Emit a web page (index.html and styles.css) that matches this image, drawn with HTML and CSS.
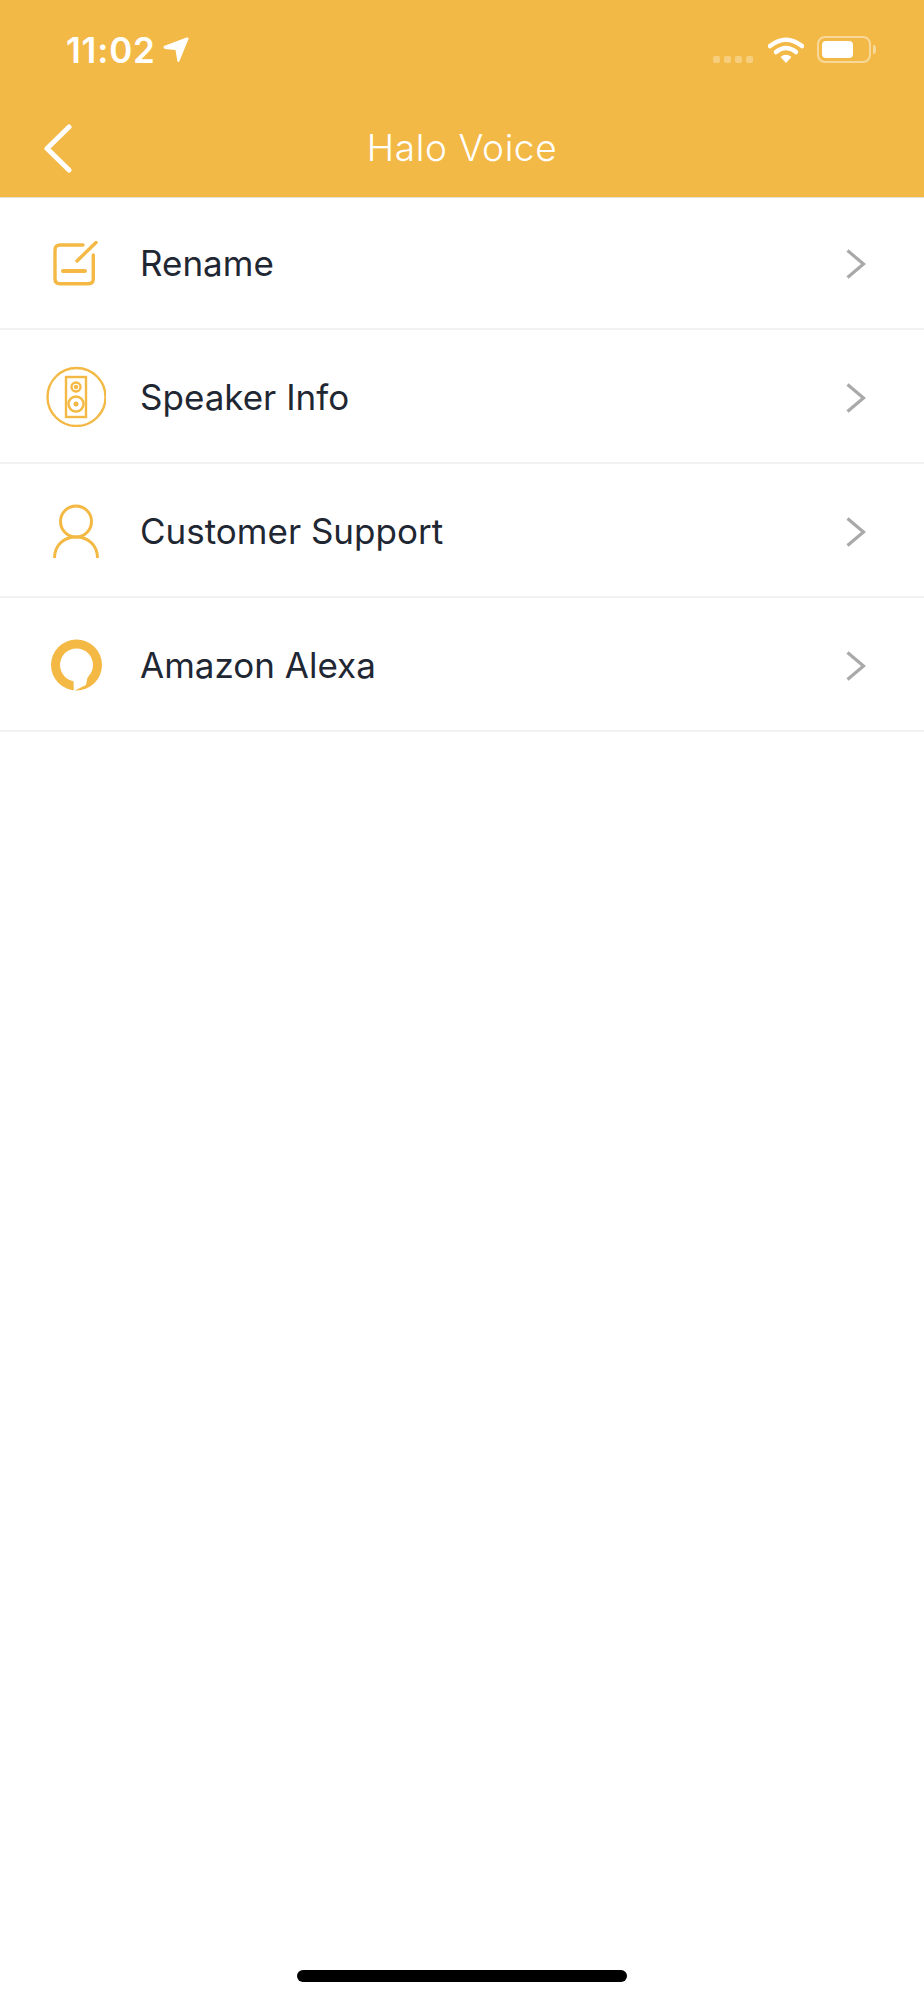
FILE: index.html
```html
<!DOCTYPE html>
<html lang="en">
<head>
<meta charset="utf-8">
<title>Halo Voice</title>
<link rel="stylesheet" href="styles.css">
</head>
<body>
<div class="screen">
  <header class="header">
    <div class="status">
      <div class="status-left">
        <span class="time">11:02</span>
        <svg class="loc" width="26" height="26" viewBox="0 0 26 26"><path d="M1 9 L23.500 0.500 Q26 0 25.500 2 L16.500 24 Q15 26 14.300 24 L12.500 13 L2 12 Q-0.300 10.500 1 9Z" fill="#fff"/></svg>
      </div>
      <div class="status-right">
        <div class="signal"><i></i><i></i><i></i><i></i></div>
        <svg class="wifi" width="36" height="26" viewBox="0 0 36 26"><path d="M2 9 Q18 -3.500 34 9" fill="none" stroke="#fff" stroke-width="4.500" stroke-linecap="round"/><path d="M8 15 Q18 7 28 15" fill="none" stroke="#fff" stroke-width="4.500" stroke-linecap="round"/><path d="M12.500 20 Q18 15.500 23.500 20 L18 26Z" fill="#fff"/></svg>
        <div class="battery"><div class="battery-body"><div class="battery-fill"></div></div><div class="battery-cap"></div></div>
      </div>
    </div>
    <div class="nav">
      <svg class="back" width="30" height="50" viewBox="0 0 30 50"><path d="M26 3 L4 24.500 L26 46" fill="none" stroke="#fff" stroke-width="5" stroke-linecap="round" stroke-linejoin="round"/></svg>
      <h1 class="title">Halo Voice</h1>
    </div>
  </header>
  <ul class="list">
    <li class="row">
      <span class="icon"><svg width="46" height="46" viewBox="0 0 46 46" fill="none" stroke="#f3b944" stroke-width="3.400" stroke-linecap="round"><path d="M30 5 H7 Q2 5 2 10 V38.700 Q2 43.700 7 43.700 H35.300 Q40.300 43.700 40.300 38.700 V15"/><path d="M24 21 L43 2.500"/><path d="M10 31 H32" stroke-width="4"/></svg></span>
      <span class="label">Rename</span>
      <svg class="chev" width="20" height="30" viewBox="0 0 20 30"><path d="M1.500 1.500 L17.500 15 L1.500 28.500" fill="none" stroke="#a9a9a9" stroke-width="3.200"/></svg>
    </li>
    <li class="row">
      <span class="icon"><svg width="60" height="62" viewBox="0 0 60 62" fill="none" stroke="#f3b944" stroke-width="2.400"><circle cx="30.500" cy="32" r="29"/><rect x="20" y="12" width="20" height="40"/><circle cx="30" cy="22" r="4.500"/><circle cx="30" cy="22" r="1"/><circle cx="30" cy="39" r="7.500"/><circle cx="30" cy="39" r="1.300"/></svg></span>
      <span class="label">Speaker Info</span>
      <svg class="chev" width="20" height="30" viewBox="0 0 20 30"><path d="M1.500 1.500 L17.500 15 L1.500 28.500" fill="none" stroke="#a9a9a9" stroke-width="3.200"/></svg>
    </li>
    <li class="row">
      <span class="icon"><svg width="46" height="56" viewBox="0 0 46 56" fill="none" stroke="#f3b944" stroke-width="3"><circle cx="23" cy="19.500" r="15.500"/><path d="M1.500 56 C1.500 44 10 35 23 35 C36 35 44.500 44 44.500 56"/></svg></span>
      <span class="label">Customer Support</span>
      <svg class="chev" width="20" height="30" viewBox="0 0 20 30"><path d="M1.500 1.500 L17.500 15 L1.500 28.500" fill="none" stroke="#a9a9a9" stroke-width="3.200"/></svg>
    </li>
    <li class="row">
      <span class="icon"><svg width="52" height="54" viewBox="0 0 52 54"><circle cx="26.500" cy="28" r="25.500" fill="#f3b944"/><circle cx="26.500" cy="28" r="16.500" fill="#fff"/><path d="M23.500 42 L23.800 54 L36 48 L38 38Z" fill="#fff"/></svg></span>
      <span class="label">Amazon Alexa</span>
      <svg class="chev" width="20" height="30" viewBox="0 0 20 30"><path d="M1.500 1.500 L17.500 15 L1.500 28.500" fill="none" stroke="#a9a9a9" stroke-width="3.200"/></svg>
    </li>
  </ul>
  <div class="home-bar"></div>
</div>
</body>
</html>
```
FILE: styles.css
```css
* { box-sizing: border-box; margin: 0; padding: 0; }
html, body { width: 924px; height: 2000px; background: #fff; overflow: hidden; }
body { font-family: Inter, "Liberation Sans", sans-serif; }
.screen { position: relative; width: 924px; height: 2000px; display: flex; flex-direction: column; }
.header { height: 198px; background: #f3b946; border-bottom: 1px solid #e4e0d6; flex: none; }
.status { height: 100px; display: flex; justify-content: space-between; align-items: flex-start; padding: 30px 0 0 66px; }
.status-left { display: flex; align-items: center; gap: 7px; }
.time { font-size: 35px; line-height: 40px; font-weight: 600; color: #fff; letter-spacing: 0.8px; }
.status-right { display: flex; align-items: flex-start; padding-right: 48px; }
.signal { display: flex; gap: 4px; margin-top: 26px; margin-right: 15px; }
.signal i { width: 7px; height: 7px; border-radius: 2px; background: rgba(255,255,255,.3); }
.wifi { margin-top: 7px; margin-right: 13px; }
.battery { display: flex; align-items: center; margin-top: 6px; }
.battery-body { width: 54px; height: 27px; border: 2px solid rgba(255,255,255,.45); border-radius: 8px; padding: 3px; }
.battery-fill { width: 31px; height: 100%; background: #fff; border-radius: 4px; }
.battery-cap { width: 3px; height: 9px; margin-left: 2px; background: rgba(255,255,255,.45); border-radius: 0 3px 3px 0; }
.nav { position: relative; height: 97px; display: flex; align-items: center; justify-content: center; }
.back { position: absolute; left: 43px; top: 24px; }
.title { font-size: 37px; font-weight: 300; color: #fff; line-height: 48px; margin-top: -1px; letter-spacing: 0.6px; }
.list { list-style: none; flex: none; }
.row { height: 134px; display: flex; align-items: center; border-bottom: 2px solid #f1f1f1; position: relative; padding: 2px 58px 0 140px; }
.row:first-child { height: 132px; padding-top: 0; }
.icon { position: absolute; left: 46px; top: 0; bottom: 0; width: 60px; display: flex; align-items: center; justify-content: center; }
.label { flex: 1; font-size: 35px; line-height: 48px; color: #1f2733; }
.chev { flex: none; margin-top: 2px; }
.home-bar { position: absolute; left: 297px; top: 1970px; width: 330px; height: 12px; background: #000; border-radius: 6px; }
```
